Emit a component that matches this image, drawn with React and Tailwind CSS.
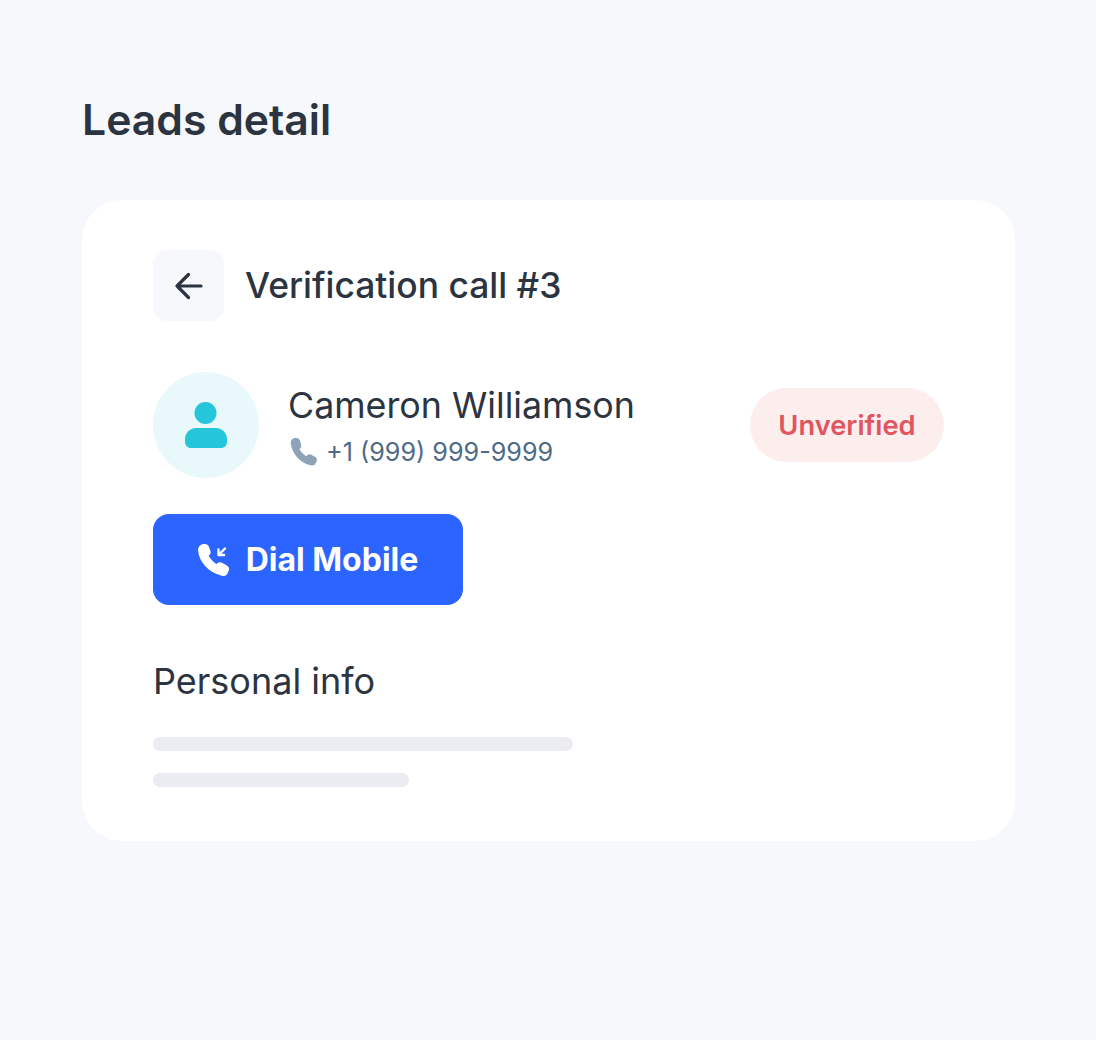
const font = { fontFamily: "Inter, sans-serif" };

function PhoneIcon({ className }) {
  return (
    <svg viewBox="0 0 28 28" className={className} fill="currentColor" stroke="currentColor" strokeLinejoin="round">
      <path
        strokeWidth="2.8"
        d="M3 5.2 C3 3.6 4.4 2.4 5.8 2.4 L7 2.4 C8 2.4 8.6 3 8.9 3.8 L10 7.4 C10.3 8.4 10 9.2 9.3 9.8 L8 10.9 C9.3 14 12.6 17.8 16.4 19.6 L17.8 18.2 C18.5 17.5 19.3 17.4 20.2 17.8 L23.6 19.6 C24.6 20.2 24.8 21 24.5 22 L24 23.2 C23.4 24.6 22 25.400 20.6 25 C11 23 4 14.6 3 5.2 Z"
      />
    </svg>
  );
}

export default function App() {
  return (
    <div className="min-h-[1040px] bg-[#f7f8fc] px-[82px] pt-[92px] text-[#2b3440]" style={font}>
      <h1 className="text-[42.7px] leading-[56px] font-semibold">Leads detail</h1>

      <div className="mt-[52px] h-[641px] w-[933px] rounded-[40px] bg-white pt-[50px] pl-[71px]">
        <div className="flex items-center gap-[21px]">
          <button className="flex h-[71px] w-[71px] items-center justify-center rounded-[14px] bg-[#f7f8fc]">
            <svg viewBox="0 0 32 32" className="h-[32px] w-[32px]" fill="none" stroke="#2b3440" strokeWidth="3.2" strokeLinecap="round" strokeLinejoin="round">
              <path d="M28 16H4M15.500 4.500 4 16l11.500 11.500" />
            </svg>
          </button>
          <h2 className="pt-[1px] text-[35.4px] leading-[44px] font-[450]">Verification call #3</h2>
        </div>

        <div className="mt-[51px] flex w-[791px] items-center">
          <div className="flex h-[106px] w-[106px] items-center justify-center rounded-full bg-[#e9f8fb]">
            <svg viewBox="0 0 42 46" className="h-[46px] w-[42px]" fill="#26c6da">
              <circle cx="20.500" cy="11" r="11" />
              <path d="M11 26H31C37 26 42 31 42 37V40C42 43.300 39.500 46 36 46H6C2.500 46 0 43.300 0 40V37C0 31 5 26 11 26Z" />
            </svg>
          </div>
          <div className="ml-[29px] flex-1">
            <p className="text-[35.8px] leading-[46px] font-normal">Cameron Williamson</p>
            <div className="mt-[8px] flex items-center gap-[7px] text-[25.2px] leading-[32px] text-[#4f6b85]">
              <PhoneIcon className="ml-[1px] h-[30px] w-[30px] text-[#8fa3b8]" />
              <span>+1 (999) 999-9999</span>
            </div>
          </div>
          <span className="flex h-[74px] w-[194px] items-center justify-center rounded-full bg-[#fdeeee] pt-[2px] text-[27.3px] font-semibold text-[#e0555f]">
            Unverified
          </span>
        </div>

        <button className="mt-[36px] flex h-[91px] w-[310px] items-center justify-center gap-[16px] rounded-[16px] bg-[#2c64ff] text-[32px] font-bold text-white">
          <svg viewBox="0 0 32 32" className="h-[32px] w-[32px]" fill="white" stroke="white" strokeLinejoin="round">
            <path
              strokeWidth="3"
              d="M1.500 6 C1.500 3.600 3.400 1.500 5.600 1.500 L7.200 1.500 C8.400 1.500 9.200 2.300 9.600 3.300 L11 7.400 C11.400 8.600 11 9.600 10.200 10.200 L8.800 11.400 C10.200 15 14.800 20 18.800 22 L20.400 20.400 C21.200 19.600 22.200 19.500 23.200 20 L28.200 22.800 C29.400 23.500 29.800 24.600 29.400 25.800 L28.800 27.500 C28 29.800 26 30.800 24 30.200 C12 27.200 2.500 18 1.500 6 Z"
            />
            <path d="M27 4.500 20.500 11M20.500 5.500v5.500h5.500" fill="none" strokeWidth="2.400" strokeLinecap="round" />
          </svg>
          <span>Dial Mobile</span>
        </button>

        <h3 className="mt-[54px] text-[36px] leading-[45px] font-normal">Personal info</h3>
        <div className="mt-[33px] h-[14px] w-[420px] rounded-full bg-[#ebebf2]" />
        <div className="mt-[22px] h-[14px] w-[256px] rounded-full bg-[#ebebf2]" />
      </div>
    </div>
  );
}
